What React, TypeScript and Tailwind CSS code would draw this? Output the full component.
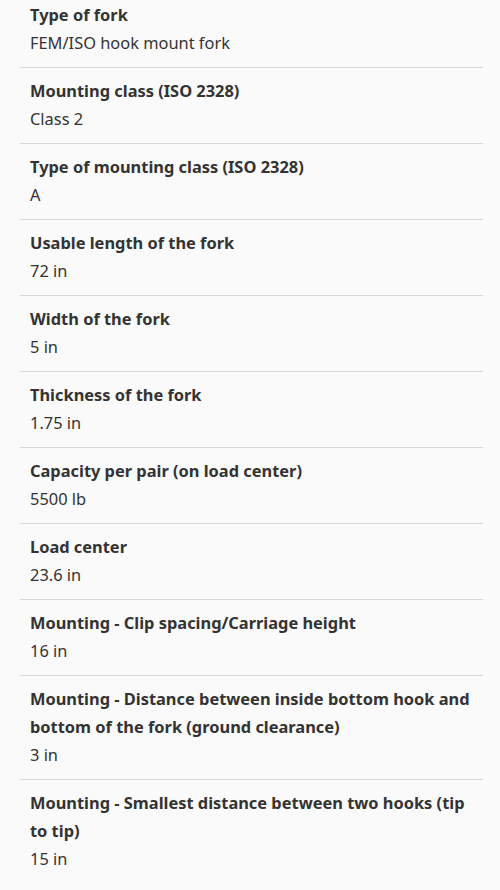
import React from "react";

const items: [string, string][] = [
  ["Type of fork", "FEM/ISO hook mount fork"],
  ["Mounting class (ISO 2328)", "Class 2"],
  ["Type of mounting class (ISO 2328)", "A"],
  ["Usable length of the fork", "72 in"],
  ["Width of the fork", "5 in"],
  ["Thickness of the fork", "1.75 in"],
  ["Capacity per pair (on load center)", "5500 lb"],
  ["Load center", "23.6 in"],
  ["Mounting - Clip spacing/Carriage height", "16 in"],
  ["Mounting - Distance between inside bottom hook and bottom of the fork (ground clearance)", "3 in"],
  ["Mounting - Smallest distance between two hooks (tip to tip)", "15 in"],
];

export default function App() {
  return (
    <div
      className="w-[500px] h-[890px] overflow-hidden bg-[#fafafa] text-[#333333]"
      style={{ fontFamily: '"Noto Sans", "Open Sans", sans-serif' }}
    >
      <div className="mt-[-8px] ml-[20px] mr-[17px]">
        {items.map(([t, v], i) => (
          <div
            key={i}
            className="border-b border-[#d9d9d9] last:border-b-0 pl-[10px] pr-[6px] pt-[9px] pb-[10px] text-[16.4px] leading-[28px]"
          >
            <div className="font-bold">{t}</div>
            <div>{v}</div>
          </div>
        ))}
      </div>
    </div>
  );
}
